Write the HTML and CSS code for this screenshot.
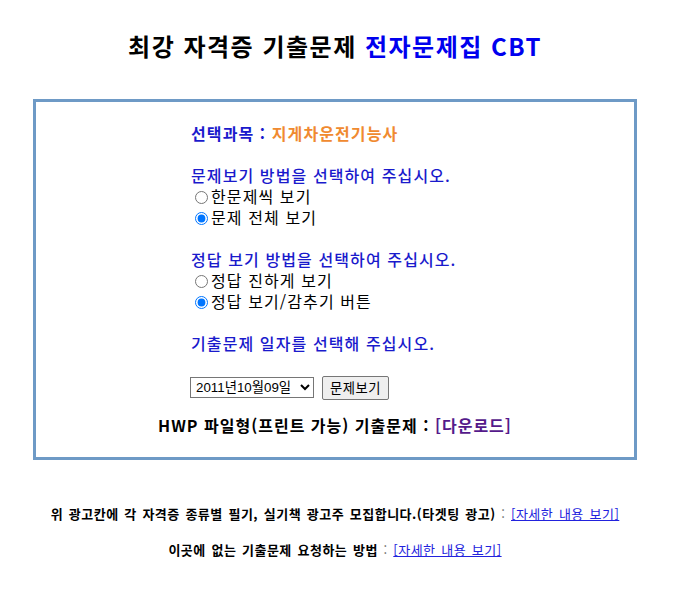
FILE: index.html
```html
<!DOCTYPE html>
<html lang="ko">
<head>
<meta charset="utf-8">
<title>최강 자격증 기출문제 전자문제집 CBT</title>
<link rel="stylesheet" href="styles.css">
</head>
<body>
<div class="page">
  <h1 class="title">최강 자격증 기출문제 <span class="title-blue">전자문제집 CBT</span></h1>
  <div class="box">
    <div class="content">
      <div class="line heading strong">선택과목 : <span class="subject">지게차운전기능사</span></div>
      <div class="blank"></div>
      <div class="line heading">문제보기 방법을 선택하여 주십시오.</div>
      <label class="line option"><input type="radio" name="view" class="radio">한문제씩 보기</label>
      <label class="line option"><input type="radio" name="view" class="radio" checked>문제 전체 보기</label>
      <div class="blank"></div>
      <div class="line heading">정답 보기 방법을 선택하여 주십시오.</div>
      <label class="line option"><input type="radio" name="ans" class="radio">정답 진하게 보기</label>
      <label class="line option"><input type="radio" name="ans" class="radio" checked>정답 보기/감추기 버튼</label>
      <div class="blank"></div>
      <div class="line heading">기출문제 일자를 선택해 주십시오.</div>
      <div class="blank"></div>
      <div class="controls">
        <select class="date-select">
          <option>2011년10월09일</option>
        </select>
        <button class="view-btn" type="button">문제보기</button>
      </div>
    </div>
    <div class="hwp">HWP 파일형(프린트 가능) 기출문제 : <a href="#" class="download">[다운로드]</a></div>
  </div>
  <p class="notice"><b>위 광고칸에 각 자격증 종류별 필기, 실기책 광고주 모집합니다.(타겟팅 광고)</b><span class="sep"> : </span><a href="#" class="more">[자세한 내용 보기]</a></p>
  <p class="notice second"><b>이곳에 없는 기출문제 요청하는 방법</b><span class="sep"> : </span><a href="#" class="more">[자세한 내용 보기]</a></p>
</div>
</body>
</html>
```

FILE: styles.css
```css
body {
  margin: 8px;
  background: #ffffff;
  color: #000000;
  font-family: "Noto Sans CJK KR", "Liberation Sans", sans-serif;
}

.page {
  width: 654px;
}

.title {
  margin: 20px 0 35px;
  text-align: center;
  font-size: 24px;
  line-height: 36px;
  letter-spacing: 1.5px;
  font-weight: bold;
  color: #000000;
}

.title-blue {
  color: #0000ee;
}

.box {
  width: 598px;
  margin: 0 auto;
  border: 3px solid #6e9ac6;
  padding: 21px 0 21px;
}

.content {
  display: flex;
  flex-direction: column;
  padding-left: 155px;
  font-size: 16px;
  letter-spacing: 1.1px;
}

.line {
  display: flex;
  align-items: center;
  height: 21px;
  line-height: 21px;
  white-space: pre;
}

.heading {
  color: #1a1acc;
  font-weight: 500;
}

.strong {
  font-weight: bold;
}

.subject {
  color: #f08a30;
}

.option {
  color: #000000;
}

.radio {
  width: 13px;
  height: 13px;
  margin: 1px 3px 0 4px;
  accent-color: #0075ff;
}

.blank {
  height: 21px;
}

.controls {
  display: flex;
  align-items: center;
  gap: 8px;
  height: 25px;
  letter-spacing: 0;
}

.date-select {
  width: 124px;
  height: 21px;
  font-family: "Liberation Sans", "Noto Sans CJK KR", sans-serif;
  font-size: 13.33px;
  padding: 0 0 0 1px;
  border: 1px solid #767676;
  border-radius: 0;
  background: #ffffff;
  color: #000000;
  margin-left: -1px;
}

.view-btn {
  height: 24px;
  padding: 0 7px;
  font-family: "Noto Sans CJK KR", "Liberation Sans", sans-serif;
  font-size: 13.33px;
  letter-spacing: 0.5px;
  background: #efefef;
  border: 1px solid #767676;
  border-radius: 2px;
  color: #000000;
}

.hwp {
  margin-top: 15px;
  text-align: center;
  font-size: 16px;
  line-height: 21px;
  letter-spacing: 1px;
  font-weight: bold;
  color: #000000;
}

.download {
  color: #551a8b;
  text-decoration: none;
}

.notice {
  margin: 46px 0 0;
  text-align: center;
  font-size: 13px;
  line-height: 16px;
  letter-spacing: 0.5px;
  word-spacing: 1.5px;
  color: #000000;
}

.notice.second {
  margin-top: 20px;
}

.notice b {
  font-weight: bold;
}

.sep {
  color: #666666;
}

.more {
  color: #2222dd;
  text-decoration: underline;
}
```
